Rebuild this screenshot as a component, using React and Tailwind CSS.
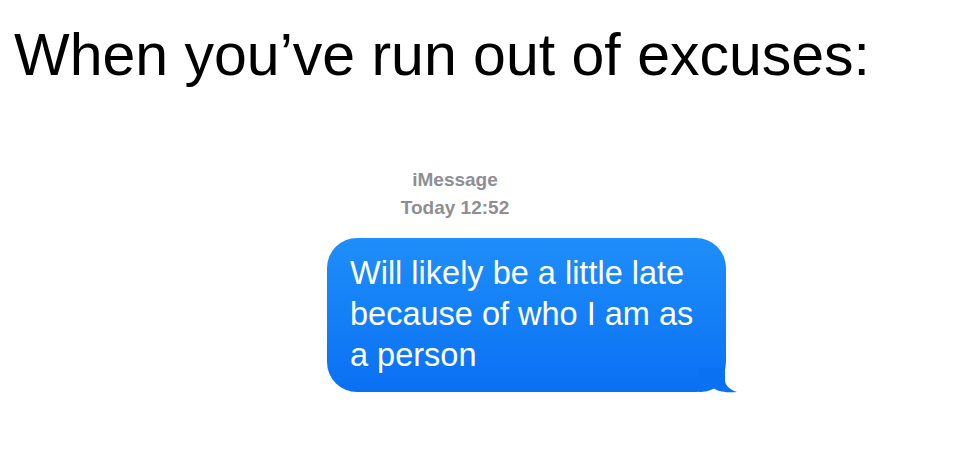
import React from 'react';

function Bubble({ children }) {
  return (
    <div className="relative w-[399px]">
      <div className="rounded-[30px] bg-gradient-to-b from-[#1f8ef9] to-[#0a70f3] pl-[23px] pr-[22px] pt-[15px] pb-[16px] text-white text-[32.5px] leading-[41px]">
        {children}
      </div>
      {/* tail */}
      <svg className="absolute left-[372px] top-[130px]" width="40" height="26" viewBox="0 0 40 26">
        <path d="M0 0 H26 V12 C26 18 32 22 38 24 C31 25 20 24 15 20.5 C11 23 5 24 0 24 Z" fill="#0b71f3" />
      </svg>
    </div>
  );
}

export default function App() {
  return (
    <div className="w-[980px] h-[474px] bg-white font-['Liberation_Sans',Arial,sans-serif] overflow-hidden">
      <h1 className="pl-[14px] pt-[21px] text-[59px] leading-[68px] text-black font-normal">
        When you’ve run out of excuses:
      </h1>
      <div className="mt-[77px] flex flex-col items-center w-[910px] text-[#8e8e93] text-[19px] leading-[28px] font-bold">
        <span>iMessage</span>
        <span>Today 12:52</span>
      </div>
      <div className="mt-[16px] ml-[327px]">
        <Bubble>
          Will likely be a little late because of who I am as a person
        </Bubble>
      </div>
    </div>
  );
}
